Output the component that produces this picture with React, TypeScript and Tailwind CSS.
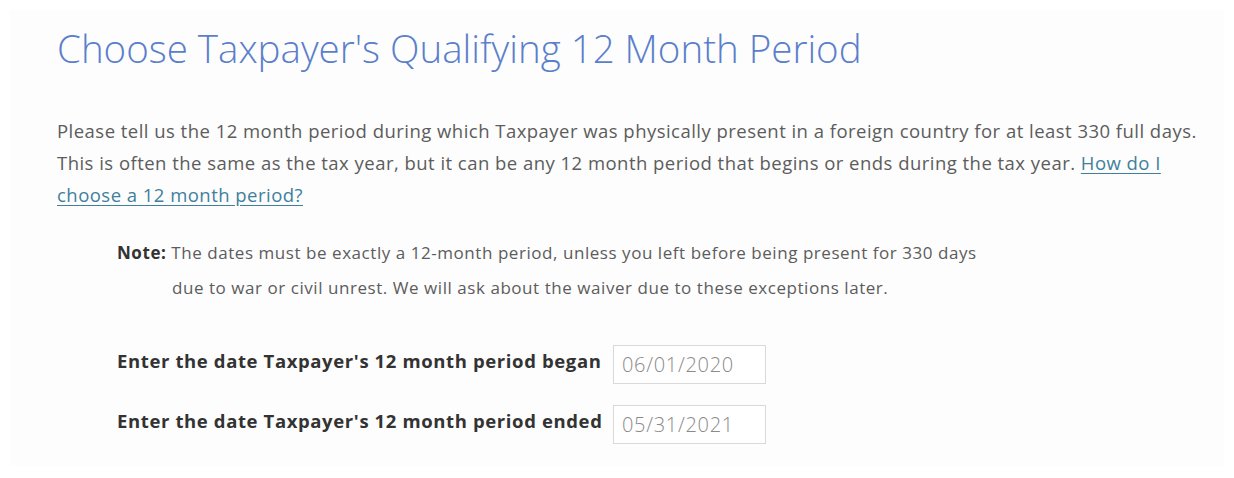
import React from 'react';

const font = { fontFamily: '"Open Sans", Lato, sans-serif' };

const DateRow = ({ label, value }: { label: string; value: string }) => (
  <div className="flex items-center">
    <label className="w-[496px] -mt-[8px] text-[18.5px] font-bold text-[#333] tracking-[0.62px]">{label}</label>
    <input
      readOnly
      value={value}
      className="w-[153px] h-[39px] border border-[#d9d9d9] bg-white px-[8px] text-[20px] font-light text-[#8a8a8a] tracking-[0.7px] outline-none"
    />
  </div>
);

const App: React.FC = () => {
  return (
    <div className="min-h-screen bg-white p-[10px]" style={font}>
      <div className="bg-[#fdfdfd] h-[456px] pl-[47px] pt-[14px]">
        <h1 className="text-[38.5px] font-light text-[#5b7fcb] leading-[48px]">
          Choose Taxpayer's Qualifying 12 Month Period
        </h1>

        <p className="mt-[43px] text-[18.5px] leading-[32px] tracking-[0.47px] text-[#5c5c5c]">
          Please tell us the 12 month period during which Taxpayer was physically present in a foreign country for at least 330 full days.
          <br />
          This is often the same as the tax year, but it can be any 12 month period that begins or ends during the tax year.{' '}
          <a href="#" className="text-[#40809c] underline underline-offset-[3px]">
            How do I<br />choose a 12 month period?
          </a>
        </p>

        <div className="mt-[24px] ml-[60px] text-[17px] leading-[35px] tracking-[0.55px] text-[#5c5c5c]">
          <div>
            <span className="font-bold text-[#333]">Note:</span> The dates must be exactly a 12-month period, unless you left before being present for 330 days
          </div>
          <div className="pl-[55px]">due to war or civil unrest. We will ask about the waiver due to these exceptions later.</div>
        </div>

        <div className="mt-[40px] ml-[60px] flex flex-col gap-[21px]">
          <DateRow label="Enter the date Taxpayer's 12 month period began" value="06/01/2020" />
          <DateRow label="Enter the date Taxpayer's 12 month period ended" value="05/31/2021" />
        </div>
      </div>
    </div>
  );
};

export default App;
